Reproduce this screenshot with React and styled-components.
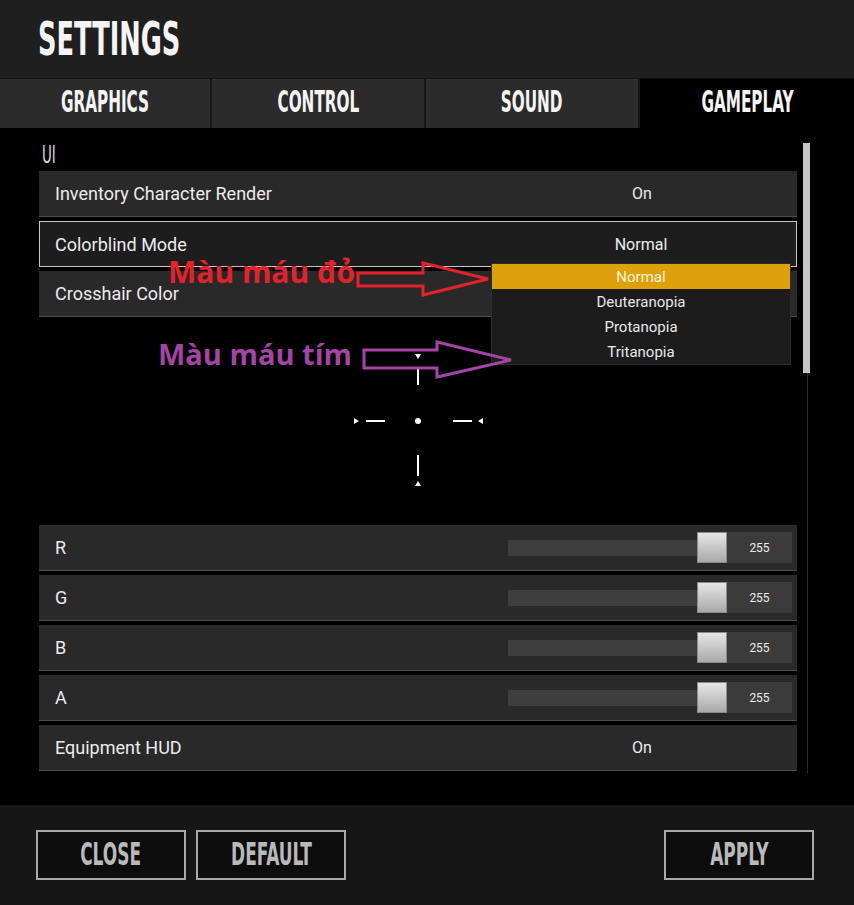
import styled, { createGlobalStyle } from 'styled-components';

const GlobalStyle = createGlobalStyle`
  html, body {
    margin: 0;
    padding: 0;
    background: #000;
  }
  body {
    font-family: Roboto, "Noto Sans", sans-serif;
    color: #ececec;
  }
`;

const Page = styled.div`
  position: relative;
  width: 854px;
  height: 905px;
  display: flex;
  flex-direction: column;
  overflow: hidden;
  background: #000;
`;

const Cond = styled.span`
  display: inline-block;
  font-family: "Liberation Sans Narrow", "DejaVu Sans Condensed", "Liberation Sans", sans-serif;
  font-weight: ${(p) => (p.$light ? 400 : 700)};
  font-size: ${(p) => p.$size}px;
  line-height: 1;
  color: ${(p) => p.$color || '#f4f4f4'};
  transform: scaleX(${(p) => p.$scale || 0.6});
  transform-origin: ${(p) => (p.$left ? 'left center' : 'center')};
  white-space: nowrap;
`;

const Header = styled.header`
  height: 78px;
  background: #1f1f1f;
  border-bottom: 1px solid #121212;
  display: flex;
  align-items: center;
  padding-left: 38px;
`;

const Tabs = styled.nav`
  display: grid;
  grid-template-columns: 210px 212px 212px 1fr;
  gap: 2px;
  height: 49px;
  background: #151515;
`;

const Tab = styled.div`
  display: flex;
  align-items: center;
  justify-content: center;
  padding-bottom: 5px;
  background: ${(p) => (p.$active ? '#000' : '#2b2b2b')};
  border-top: 1px solid ${(p) => (p.$active ? '#000' : '#333')};
`;

const Content = styled.main`
  flex: 1;
  display: flex;
  padding: 15px 0 0 39px;
`;

const List = styled.div`
  width: 758px;
  display: flex;
  flex-direction: column;
  gap: 4px;
`;

const SectionLabel = styled.div`
  height: 24px;
  padding-left: 3px;
  display: flex;
  align-items: center;
`;

const Row = styled.div`
  position: relative;
  height: 46px;
  box-sizing: border-box;
  display: grid;
  grid-template-columns: 1fr ${(p) => (p.$slider ? 'auto' : '310px')};
  align-items: center;
  padding: 0 ${(p) => (p.$slider ? '5px' : '0')} 0 16px;
  background: ${(p) => (p.$focused ? '#1d1d1d' : '#292929')};
  border: ${(p) => (p.$focused ? '1px solid #c4c4c4' : 'none')};
  border-bottom: 1px solid ${(p) => (p.$focused ? '#c4c4c4' : '#4c4c4c')};
  padding-left: ${(p) => (p.$focused ? '15px' : '16px')};
`;

const Label = styled.span`
  font-size: 18px;
  color: #ececec;
`;

const Value = styled.span`
  font-size: 16px;
  text-align: center;
  color: #ececec;
`;

const Dropdown = styled.ul`
  position: absolute;
  top: 41px;
  right: 5px;
  width: 298px;
  margin: 0;
  padding: 0;
  list-style: none;
  background: #1c1c1c;
  border: 1px solid #2c2c2c;
  z-index: 3;
`;

const Option = styled.li`
  height: 25px;
  display: flex;
  align-items: center;
  justify-content: center;
  font-size: 15px;
  color: ${(p) => (p.$selected ? '#fbf3de' : '#e8e8e8')};
  background: ${(p) => (p.$selected ? '#dea10c' : 'transparent')};
`;

const Preview = styled.div`
  height: 200px;
  display: flex;
  align-items: center;
  justify-content: center;
`;

const Slider = styled.div`
  display: flex;
  align-items: center;
`;

const Track = styled.div`
  width: 189px;
  height: 16px;
  background: #3e3e3e;
`;

const Thumb = styled.div`
  width: 30px;
  height: 31px;
  box-sizing: border-box;
  border: 1px solid #8a8a8a;
  background: linear-gradient(#e6e6e6, #a9a9a9);
`;

const SliderValue = styled.div`
  width: 65px;
  height: 31px;
  display: flex;
  align-items: center;
  justify-content: center;
  background: #3b3b3b;
  font-size: 12px;
  color: #ececec;
`;

const Scroll = styled.div`
  width: 7px;
  margin-left: 6px;
  display: flex;
  flex-direction: column;
  align-items: flex-end;
`;

const ScrollThumb = styled.div`
  width: 7px;
  height: 230px;
  background: #c6c6c6;
`;

const ScrollLine = styled.div`
  width: 1px;
  height: 400px;
  margin-right: 2px;
  background: #2a2a2a;
`;

const Footer = styled.footer`
  height: 100px;
  box-sizing: border-box;
  background: #161616;
  display: flex;
  align-items: flex-start;
  gap: 10px;
  padding: 25px 40px 0 36px;
`;

const Button = styled.button`
  width: 150px;
  height: 50px;
  padding: 0 0 2px;
  box-sizing: border-box;
  border: 2px solid #a9a9a9;
  background: #0c0c0c;
  display: flex;
  align-items: center;
  justify-content: center;
  margin-left: ${(p) => (p.$push ? 'auto' : '0')};
  cursor: pointer;
`;

const Note = styled.span`
  position: absolute;
  left: ${(p) => p.$x}px;
  top: ${(p) => p.$y}px;
  font-family: "Open Sans", "Noto Sans", sans-serif;
  font-weight: 700;
  font-size: ${(p) => p.$size}px;
  line-height: 1;
  color: ${(p) => p.$color};
  white-space: nowrap;
  z-index: 5;
`;

const Arrows = styled.svg`
  position: absolute;
  left: 340px;
  top: 250px;
  z-index: 5;
`;

const Crosshair = () => (
  <svg width="140" height="140" viewBox="-70 -70 140 140">
    <g stroke="#fff" strokeWidth="2">
      <line x1="0" y1="-53" x2="0" y2="-36" />
      <line x1="0" y1="34" x2="0" y2="55" />
      <line x1="-52" y1="0" x2="-33" y2="0" />
      <line x1="35" y1="0" x2="54" y2="0" />
    </g>
    <g fill="#fff">
      <circle cx="0" cy="0" r="3" />
      <polygon points="-3,-67 3,-67 0,-62" />
      <polygon points="-3,65 3,65 0,60" />
      <polygon points="-64,-3 -64,3 -59,0" />
      <polygon points="65,-3 65,3 60,0" />
    </g>
  </svg>
);

const options = ['Normal', 'Deuteranopia', 'Protanopia', 'Tritanopia'];
const channels = ['R', 'G', 'B', 'A'];

const App = () => {
  return (
    <Page>
      <GlobalStyle />
      <Header>
        <Cond $size={46} $scale={0.62} $left>SETTINGS</Cond>
      </Header>
      <Tabs>
        <Tab><Cond $size={30} $scale={0.565}>GRAPHICS</Cond></Tab>
        <Tab><Cond $size={30} $scale={0.565}>CONTROL</Cond></Tab>
        <Tab><Cond $size={30} $scale={0.565}>SOUND</Cond></Tab>
        <Tab $active><Cond $size={30} $scale={0.565}>GAMEPLAY</Cond></Tab>
      </Tabs>
      <Content>
        <List>
          <SectionLabel>
            <Cond $size={24} $scale={0.62} $light $left $color="#d8d8d8">UI</Cond>
          </SectionLabel>
          <Row>
            <Label>Inventory Character Render</Label>
            <Value>On</Value>
          </Row>
          <Row $focused>
            <Label>Colorblind Mode</Label>
            <Value>Normal</Value>
            <Dropdown>
              {options.map((o, i) => (
                <Option key={o} $selected={i === 0}>{o}</Option>
              ))}
            </Dropdown>
          </Row>
          <Row>
            <Label>Crosshair Color</Label>
            <Value />
          </Row>
          <Preview>
            <Crosshair />
          </Preview>
          {channels.map((c) => (
            <Row key={c} $slider>
              <Label>{c}</Label>
              <Slider>
                <Track />
                <Thumb />
                <SliderValue>255</SliderValue>
              </Slider>
            </Row>
          ))}
          <Row>
            <Label>Equipment HUD</Label>
            <Value>On</Value>
          </Row>
        </List>
        <Scroll>
          <ScrollThumb />
          <ScrollLine />
        </Scroll>
      </Content>
      <Footer>
        <Button><Cond $size={32} $scale={0.59} $color="#b9b9b9">CLOSE</Cond></Button>
        <Button><Cond $size={32} $scale={0.59} $color="#b9b9b9">DEFAULT</Cond></Button>
        <Button $push><Cond $size={32} $scale={0.59} $color="#b9b9b9">APPLY</Cond></Button>
      </Footer>

      <Note $x={168} $y={257} $size={30} $color="#e5212b">Màu máu đỏ</Note>
      <Note $x={158} $y={339} $size={29} $color="#a344a6">Màu máu tím</Note>
      <Arrows width="180" height="135" viewBox="0 0 180 135">
        <polygon
          points="18,23 83,23 83,13 148,29 83,45 83,36 18,36"
          fill="none"
          stroke="#e5212b"
          strokeWidth="3"
        />
        <polygon
          points="24,100 97,100 97,92 171,110 97,127 97,118 24,118"
          fill="none"
          stroke="#a344a6"
          strokeWidth="3"
        />
      </Arrows>
    </Page>
  );
};

export default App;
